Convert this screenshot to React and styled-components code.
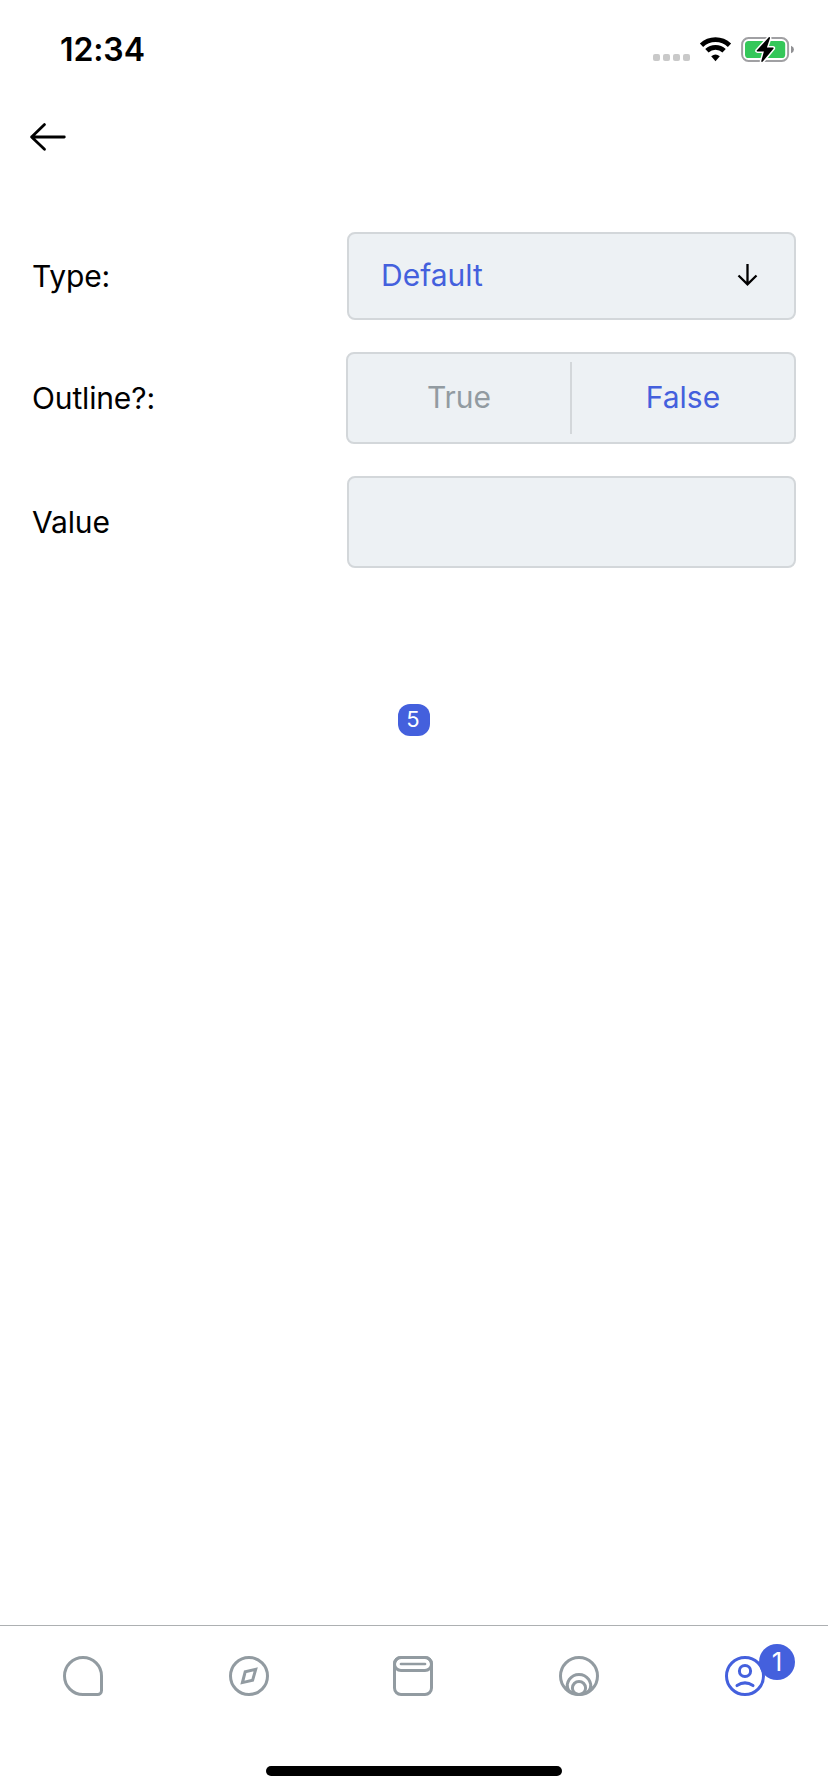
import React from "react";
import styled, { createGlobalStyle } from "styled-components";

const GlobalStyle = createGlobalStyle`
  * { box-sizing: border-box; }
  body { margin: 0; background: #fff; }
`;

const colors = {
  accent: "#4460dd",
  muted: "#929ba1",
  field: "#edf1f4",
  border: "#d3d7da",
};

const Screen = styled.div`
  display: flex;
  flex-direction: column;
  width: 828px;
  height: 1792px;
  background: #fff;
  color: #000;
  font-family: Inter, "Liberation Sans", sans-serif;
  font-size: 30px;
  line-height: 36px;
`;

const StatusBar = styled.header`
  display: flex;
  justify-content: space-between;
  height: 96px;
  padding: 30px 33px 0 60px;
`;

const Clock = styled.time`
  font-size: 32px;
  font-weight: 600;
  line-height: 40px;
  letter-spacing: -0.1px;
`;

const StatusIcons = styled.div`
  display: flex;
  align-items: flex-start;
  padding-top: 4px;
`;

const Signal = styled.div`
  display: flex;
  gap: 3px;
  margin: 20px 9px 0 0;
`;

const SignalDot = styled.span`
  width: 7px;
  height: 7px;
  border-radius: 2px;
  background: #c9c9c9;
`;

const Battery = styled.svg`
  margin-left: 9px;
`;

const NavBar = styled.nav`
  height: 136px;
  padding: 25px 0 0 28px;
`;

const BackButton = styled.button`
  display: flex;
  padding: 0;
  border: 0;
  background: none;
`;

const Form = styled.main`
  flex: 1;
  display: flex;
  flex-direction: column;
  gap: 32px;
  padding: 0 32px;
`;

const Row = styled.div`
  display: flex;
  align-items: center;
  justify-content: space-between;
`;

const Label = styled.label`
  letter-spacing: -0.15px;
`;

const Field = styled.div`
  display: flex;
  align-items: center;
  width: ${(p) => p.$width || 449}px;
  height: ${(p) => p.$height || 92}px;
  border: 2px solid ${colors.border};
  border-radius: 8px;
  background: ${colors.field};
`;

const SelectField = styled(Field)`
  justify-content: space-between;
  padding: 0 35px 2px 32px;
  color: ${colors.accent};
`;

const Option = styled.span`
  flex: 1;
  text-align: center;
  padding-bottom: 2px;
  color: ${(p) => (p.$active ? colors.accent : colors.muted)};
`;

const Divider = styled.span`
  width: 2px;
  height: 72px;
  background: ${colors.border};
`;

const Preview = styled.div`
  display: flex;
  justify-content: center;
  padding-top: 104px;
`;

const CountBadge = styled.span`
  width: 32px;
  height: 32px;
  padding-right: 2px;
  border-radius: 12px;
  background: ${colors.accent};
  color: #fff;
  font-size: 22px;
  line-height: 31px;
  text-align: center;
`;

const TabBar = styled.nav`
  display: grid;
  grid-template-columns: 166px 166px 162px 170px 162px;
  height: 141px;
  border-top: 1px solid #adb0b2;
`;

const Tab = styled.a`
  display: flex;
  justify-content: center;
  padding-top: 30px;
  color: ${(p) => (p.$active ? colors.accent : colors.muted)};
`;

const IconWrap = styled.span`
  position: relative;
  width: 40px;
  height: 40px;
`;

const IconSvg = styled.svg`
  display: block;
`;

const TabBadge = styled.span`
  position: absolute;
  left: 34px;
  top: -12px;
  width: 36px;
  height: 36px;
  border-radius: 50%;
  background: ${colors.accent};
  color: #fff;
  font-size: 26px;
  line-height: 36px;
  text-align: center;
`;

const HomeArea = styled.footer`
  display: flex;
  justify-content: center;
  height: 26px;
`;

const HomeIndicator = styled.span`
  width: 296px;
  height: 10px;
  border-radius: 5px;
  background: #000;
`;

const TabIcon = ({ children }) => (
  <IconSvg width="40" height="40" viewBox="0 0 40 40" fill="none" stroke="currentColor" strokeWidth="3" strokeLinecap="round">
    {children}
  </IconSvg>
);

const tabs = [
  {
    name: "messages",
    icon: <path d="M20 1.5A18.5 18.5 0 0 1 38.5 20V34.5a4 4 0 0 1-4 4H20A18.5 18.5 0 0 1 20 1.5Z" />,
  },
  {
    name: "explore",
    icon: (
      <>
        <circle cx="20" cy="20" r="18.5" />
        <path d="M26.7 13.4 23.6 24.3 13.4 26.6 16.2 15.8Z" strokeLinecap="butt" />
      </>
    ),
  },
  {
    name: "library",
    icon: (
      <>
        <rect x="1.5" y="1.5" width="37" height="37" rx="6.5" />
        <rect x="1.5" y="1.5" width="37" height="13" rx="6.5" />
        <path d="M8 8H32" strokeWidth="2.7" />
      </>
    ),
  },
  {
    name: "radar",
    icon: (
      <>
        <circle cx="20" cy="20" r="18.5" />
        <path d="M8.9 34.2A11.8 11.8 0 1 1 31.1 34.2" />
        <circle cx="20" cy="32" r="6.6" />
        <path d="M6 31 9.5 29Q10 34 13.6 35.5L15 38.5Q9 36.5 6 31ZM34 31 30.5 29Q30 34 26.4 35.5L25 38.5Q31 36.5 34 31Z" fill="currentColor" stroke="none" />
      </>
    ),
  },
  {
    name: "profile",
    active: true,
    badge: 1,
    icon: (
      <>
        <circle cx="20" cy="20" r="18.5" />
        <circle cx="20" cy="15" r="5.6" />
        <path d="M12 29.6Q20 24.2 28 29.6" />
      </>
    ),
  },
];

export default function App() {
  return (
    <Screen>
      <GlobalStyle />
      <StatusBar>
        <Clock>12:34</Clock>
        <StatusIcons>
          <Signal>
            {[0, 1, 2, 3].map((n) => (
              <SignalDot key={n} />
            ))}
          </Signal>
          <svg width="33" height="28" viewBox="0 0 33 28">
            <g fill="none" stroke="#000" strokeWidth="4.7">
              <path d="M2.5 11.2A20.2 20.2 0 0 1 30.5 11.2" />
              <path d="M7.9 16.8A12.3 12.3 0 0 1 25.1 16.8" />
            </g>
            <path d="M12.2 22.2Q16.5 18.8 20.8 22.2L16.5 27.2Z" />
          </svg>
          <Battery width="54" height="32" viewBox="0 0 54 32">
            <rect x="1.1" y="4.1" width="46" height="22.8" rx="6.4" fill="#fff" stroke="#a0a0a3" strokeWidth="2" />
            <rect x="4" y="7" width="40.2" height="17" rx="3.6" fill="#34c759" />
            <path d="M50 11.8Q53 13 53 15.5T50 19.2Z" fill="#909093" />
            <path d="M28 3 15.7 16.5Q15.4 17.4 16.4 17.4H22.9L20.2 27.2Q20.6 28.6 21.8 27.6L32.6 14.6Q33 13.4 31.9 13.4H25.9L29 4.2Q29 2.6 28 3Z" fill="#000" stroke="#fff" strokeWidth="3" paintOrder="stroke" />
          </Battery>
        </StatusIcons>
      </StatusBar>
      <NavBar>
        <BackButton aria-label="Back">
          <svg width="40" height="32" viewBox="0 0 40 32" fill="none" stroke="#000" strokeWidth="2.8" strokeLinecap="round" strokeLinejoin="round">
            <path d="M36.3 16H3.6M16.5 3.6 3.6 16 16.5 28.2" />
          </svg>
        </BackButton>
      </NavBar>
      <Form>
        <Row>
          <Label>Type:</Label>
          <SelectField $height={88}>
            Default
            <svg width="24" height="26" viewBox="0 0 24 26" fill="none" stroke="#000" strokeWidth="2.3">
              <path d="M12.5 2V23M3.5 13.5 12.5 22.3 21.5 13.5" />
            </svg>
          </SelectField>
        </Row>
        <Row>
          <Label>Outline?:</Label>
          <Field $width={450}>
            <Option>True</Option>
            <Divider />
            <Option $active>False</Option>
          </Field>
        </Row>
        <Row>
          <Label>Value</Label>
          <Field />
        </Row>
        <Preview>
          <CountBadge>5</CountBadge>
        </Preview>
      </Form>
      <TabBar>
        {tabs.map((tab) => (
          <Tab key={tab.name} $active={tab.active}>
            <IconWrap>
              <TabIcon>{tab.icon}</TabIcon>
              {tab.badge && <TabBadge>{tab.badge}</TabBadge>}
            </IconWrap>
          </Tab>
        ))}
      </TabBar>
      <HomeArea>
        <HomeIndicator />
      </HomeArea>
    </Screen>
  );
}
